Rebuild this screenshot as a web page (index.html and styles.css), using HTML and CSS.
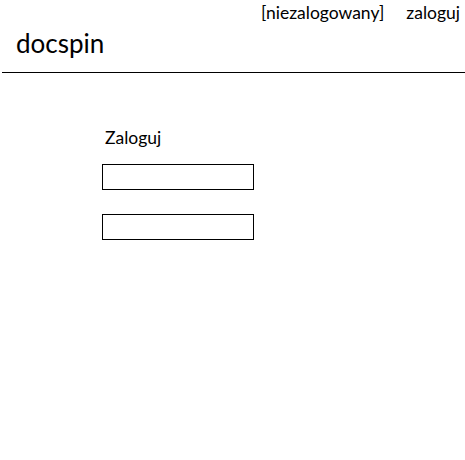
FILE: index.html
```html
<!DOCTYPE html>
<html lang="pl">
<head>
<meta charset="utf-8">
<title>docspin</title>
<link rel="stylesheet" href="styles.css">
</head>
<body>
<header class="header">
  <nav class="topbar">
    <span class="status">[niezalogowany]</span>
    <a class="login-link" href="#">zaloguj</a>
  </nav>
  <div class="brand">docspin</div>
</header>
<main class="main">
  <form class="login-form">
    <div class="form-title">Zaloguj</div>
    <input class="field" type="text">
    <input class="field" type="password">
  </form>
</main>
</body>
</html>
```
FILE: styles.css
```css
html, body {
  margin: 0;
  padding: 0;
  background: #fff;
  color: #000;
  font-family: "Lato", "Open Sans", sans-serif;
}
.header {
  margin-left: 2px;
  border-bottom: 1px solid #000;
}
.topbar {
  display: flex;
  justify-content: flex-end;
  gap: 22px;
  padding: 3px 5px 0 0;
  font-size: 17.5px;
  line-height: 20px;
}
.login-link {
  color: #000;
  text-decoration: none;
}
.brand {
  font-size: 26px;
  line-height: 32px;
  padding: 4px 0 13px 14px;
}
.main {
  padding: 55px 0 0 102px;
}
.login-form {
  display: flex;
  flex-direction: column;
  align-items: flex-start;
}
.form-title {
  font-size: 17.5px;
  line-height: 20px;
  padding-left: 3px;
  margin-bottom: 16px;
}
.field {
  box-sizing: border-box;
  width: 152px;
  height: 26px;
  margin: 0 0 24px;
  padding: 0;
  border: 1px solid #000;
  border-radius: 0;
  background: #fff;
  outline: none;
}
```
